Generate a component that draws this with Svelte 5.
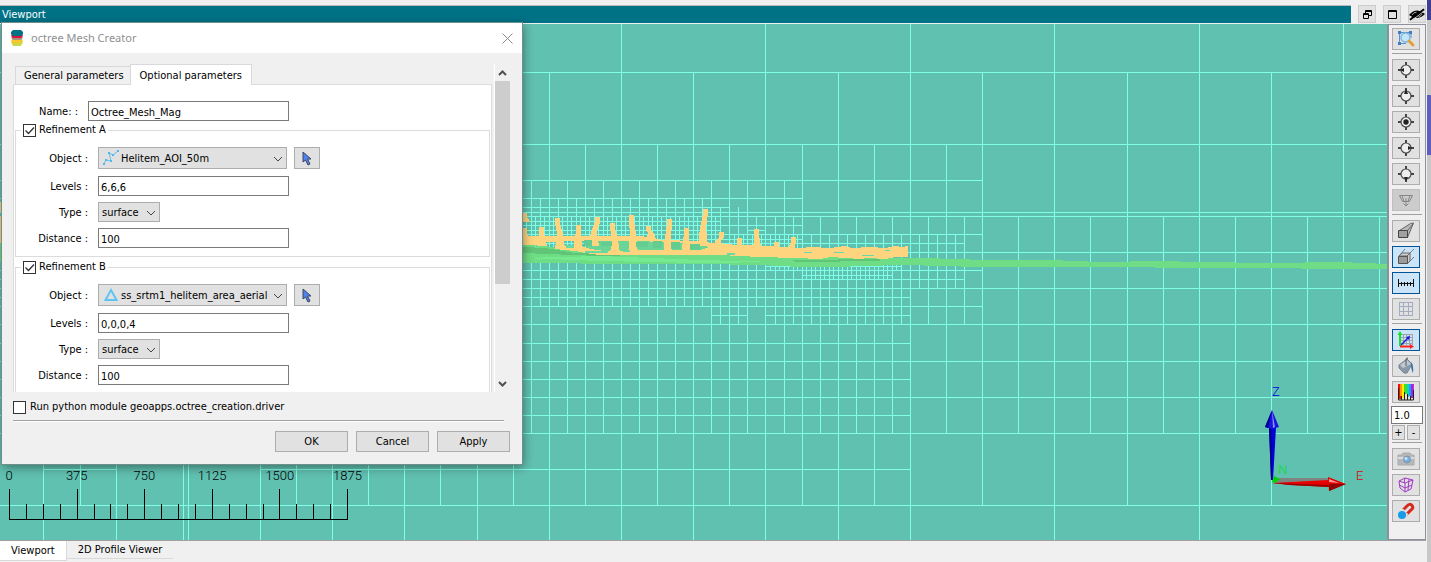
<script>
  let name = $state('Octree_Mesh_Mag');
  let runModule = $state(false);
  let scale = $state('1.0');

  let groups = $state([
    { id: 'a', title: 'Refinement A', on: true, icon: 'curve', object: 'Helitem_AOI_50m', levels: '6,6,6', type: 'surface', distance: '100' },
    { id: 'b', title: 'Refinement B', on: true, icon: 'surface', object: 'ss_srtm1_helitem_area_aerial', levels: '0,0,0,4', type: 'surface', distance: '100' }
  ]);

  // Mesh cell edges. Columns: [x positions, top, bottom]; rows: [y, left, right].
  const run = (from, to, step) => {
    const out = [];
    for (let v = from; v <= to; v += step) out.push(Math.round(v));
    return out;
  };
  const columns = [
    [[621, 765, 910, 1054, 1199, 1343], 24, 540],
    [[43, 116, 183, 188, 260, 332, 404, 477, 549, 693, 838], 72, 540],
    [[982, 1127, 1271], 72, 505],
    [[80, 296, 368, 440, 513, 585, 657, 729, 802, 874], 144, 505],
    [[946], 144, 433],
    [[1018, 1090, 1163, 1235, 1307, 1379], 216, 433],
    [[531, 567, 603, 639, 675, 711], 180, 433],
    [[747, 784], 180, 433],
    [[820, 856, 892], 216, 433],
    [[928, 964], 216, 324],
    [run(522, 712, 18), 198, 306],
    [[720, 738], 207, 324],
    [[756], 216, 306],
    [[775, 793], 216, 324],
    [[811, 829, 847, 865, 883, 901], 234, 324],
    [[919, 937, 955], 234, 288],
    [run(526, 721, 9), 216, 252],
    [run(531, 720, 9), 216, 252],
    [run(734, 802, 9), 234, 250],
    [run(770, 903, 9), 265, 270],
    [run(806, 890, 9), 270, 279]
  ];
  const rows = [
    [72, 0, 2000], [144, 0, 2000], [180, 0, 982], [198, 0, 802], [207, 0, 729], [212, 0, 2000],
    [216, 0, 2000], [221, 0, 720], [225, 0, 802], [230, 0, 720], [230, 747, 765], [234, 0, 982],
    [239, 0, 802], [243, 0, 964], [252, 0, 2000], [266, 765, 901], [270, 0, 982], [275, 802, 892],
    [279, 0, 964], [288, 0, 2000], [297, 0, 910], [306, 0, 982], [315, 711, 747], [315, 765, 910],
    [324, 0, 2000], [343, 0, 910], [361, 0, 2000], [379, 0, 910], [397, 0, 2000], [415, 0, 910],
    [433, 0, 2000], [469, 43, 116], [469, 260, 910], [505, 0, 2000]
  ];
  const edges =
    columns.map(([xs, a, b]) => xs.map((x) => `M${x + 0.5} ${a}V${b}`).join('')).join('') +
    rows.map(([y, a, b]) => `M${a} ${y + 0.5}H${b}`).join('');

  // Flight line towers: top x, foot x, top y, foot y
  const towers = [
    [524, 525, 213, 222], [524, 525, 228, 245], [541, 542, 227, 246], [557, 560, 218, 249], [578, 578, 225, 251],
    [597, 594, 217, 246], [612, 615, 223, 254], [631, 633, 215, 254], [648, 651, 226, 240], [669, 668, 219, 254],
    [686, 686, 228, 254], [705, 703, 209, 246], [721, 718, 232, 250], [739, 739, 238, 256], [756, 757, 229, 252],
    [776, 776, 242, 254], [793, 792, 237, 254]
  ];
  const towerPath = towers
    .map(([tx, fx, ty, fy]) => {
      const m = Math.round((ty + fy) / 2);
      return `M${tx - 2} ${ty}H${tx + 3}V${ty + 5}L${fx + 3} ${m}L${fx + 5} ${fy}H${fx - 5}L${fx - 3} ${m}L${tx - 2} ${ty + 5}Z`;
    })
    .join('');

  const ticks = Array.from({ length: 21 }, (_, i) => [Math.round(9 + i * 16.9) + 0.5, i % 4 === 0]);
  const tickLabels = ['0', '375', '750', '1125', '1500', '1875'];

  const tools = [
    [['zoom', 'Zoom to area']],
    [['west', 'View from west'], ['up', 'View from top'], ['centre', 'Centre view'], ['east', 'View from east'], ['down', 'View from below'], ['plane', 'View plane', 'off']],
    [['persp', 'Perspective'], ['ortho', 'Orthographic', 'on'], ['ruler', 'Scale bar', 'on'], ['grid', 'Grid']],
    [['axes', 'Axes', 'on'], ['fill', 'Background'], ['colours', 'Colours']],
    [['camera', 'Snapshot'], ['mesh', 'Mesh'], ['magnet', 'Snap']]
  ];
</script>

{#snippet glyph(kind)}
  <svg class="glyph" width="20" height="18" viewBox="0 0 20 18" aria-hidden="true">
    {#if kind === 'zoom'}
      <path d="M3.500 2.500H15M3.500 2.500V13.500H10M15 3v5" fill="none" stroke="#5b92c8" />
      <circle cx="9.500" cy="7.500" r="4.500" fill="#bfe6fb" stroke="#82b6dc" stroke-width="1.500" />
      <path d="m13 11 4 4" stroke="#e0a13b" stroke-width="3" stroke-linecap="round" />
      <path d="M2 1h3v3H2zM13 1h3v3h-3zM2 12h3v3H2z" fill="#3d7fc4" />
    {:else if ['west', 'up', 'centre', 'east', 'down'].includes(kind)}
      <circle cx="10" cy="9" r="5" fill="#eee" stroke="#4a4a4a" stroke-width="1.200" />
      <path d="M10 1v3M10 14v3M2 9h3M15 9h3" stroke="#444" stroke-width="2" />
      {#if kind === 'west'}<path d="m4 9 4-2v4z" fill="#222" />{/if}
      {#if kind === 'up'}<path d="m10 2 2 5H8z" fill="#222" />{/if}
      {#if kind === 'centre'}<circle cx="10" cy="9" r="2.700" fill="#222" />{/if}
      {#if kind === 'east'}<path d="m16 9-4-2v4z" fill="#222" />{/if}
      {#if kind === 'down'}<path d="m10 16 2-4H8z" fill="#222" />{/if}
    {:else if kind === 'plane'}
      <path d="M3.500 4.500h13l-3 6h-7zM6 4.500l2 6M14 4.500l-2 6M10 7v7M7.500 12.500l2.500 2.500 2.500-2.500" fill="none" stroke="#858585" />
    {:else if kind === 'persp'}
      <path d="m3.500 8.500 11-7 3-.500-6 14.500zM11.500 8.500l6-7" fill="#b9b9b9" stroke="#666" />
      <path d="M2.500 8.500h9v7h-9z" fill="#a0a0a0" stroke="#444" />
    {:else if kind === 'ortho'}
      <path d="m3 8 6-7M11 8l7-7M12 15l6-6" stroke="#6c7f90" />
      <path d="m3 8 3-3h8l-3 3zM11 8l3-3v8l-3 3z" fill="#cfcfcf" stroke="#666" />
      <path d="M2.500 8.500h9v7h-9z" fill="#9b9b9b" stroke="#555" />
    {:else if kind === 'ruler'}
      <path d="M2.500 5v8M5.500 8v4M8.500 8v4M11.500 8v4M14.500 8v4M17.500 5v8M2 9.500h16" fill="none" stroke="#111" shape-rendering="crispEdges" />
    {:else if kind === 'grid'}
      <path d="M3.500 2v14M7.500 2v14M12.500 2v14M16.500 2v14M3 2.500h14M3 6.500h14M3 11.500h14M3 15.500h14" fill="none" stroke="#a3abc0" />
    {:else if kind === 'axes'}
      <path d="M7.500 3v11M10.500 3v11M13.500 3v11M16.500 3v11M4 3.500h13M4 6.500h13M4 9.500h13M4 12.500h13" fill="none" stroke="#9aa5ae" />
      <path d="m4 15 8-8" stroke="#1616dd" stroke-width="1.500" /><path d="m14 5-1 4-3-3z" fill="#1616dd" />
      <path d="M4 15V3" stroke="#17e02a" stroke-width="2" /><path d="m4 0 2.500 4h-5z" fill="#17e02a" />
      <path d="M4 15.500h11" stroke="#f22" stroke-width="2" /><path d="m18 15.500-4-2.500v5z" fill="#f22" />
    {:else if kind === 'fill'}
      <path d="m3 8 8-6 5 5-5 9-3 0-5-5z" fill="#8a98a8" stroke="#76838f" />
      <path d="m4 8 7-5 4 4-8 4z" fill="#c0c9d2" />
      <path d="M10 9V2.500q0-1.500 2-1.500" fill="none" stroke="#555" /><path d="M15 5q3 3 2 11-2-3-2-9z" fill="#2f78b3" />
    {:else if kind === 'colours'}
      <path d="M2 1h3v15H2z" fill="#e11" /><path d="M4 1h3v12H4z" fill="#f90" /><path d="M6 1h3v14H6z" fill="#fe0" />
      <path d="M8 1h3v10H8z" fill="#4d2" /><path d="M11 1h2v13h-2z" fill="#0db" /><path d="M13 1h2v12h-2z" fill="#29f" /><path d="M15 1h2v14h-2z" fill="#92f" /><path d="M17 1h1v15h-1z" fill="#e2a" />
      <path d="M2.500 5v12h15V7M5.500 13v4M8.500 9v8M11.500 11v6M14.500 13v4" fill="none" stroke="#221" />
    {:else if kind === 'camera'}
      <path d="M2 5h4l1-2h7l1 2h3v10H2z" fill="#b5b8bb" stroke="#aaa" /><path d="M2 7h16v2H2z" fill="#d9dbdc" />
      <circle cx="11" cy="9.500" r="3.500" fill="#75aee0" stroke="#8793a0" /><circle cx="10" cy="8.500" r="1.500" fill="#c6e3fa" />
    {:else if kind === 'mesh'}
      <path d="m3 5 6-3 8 2-2 9-6 3-5-4zM3 5l6 2 8-3M9 7v9M9 2 8 7M3.500 9l5.500 3 7-3M13 3l-1 11" fill="none" stroke="#a23bc4" />
    {:else if kind === 'magnet'}
      <path d="m7 8 4-4q3-3 5-.500t-1 4.500l-5 5" fill="none" stroke="#d52b1e" stroke-width="3" />
      <path d="m6 9.500 2-2M9.500 13.500l2-2" stroke="#ddd" stroke-width="3" /><circle cx="6" cy="13" r="4" fill="#139ce8" />
    {/if}
  </svg>
{/snippet}

<div class="app">
  <div class="main">
    <header class="dock">
      <h1>Viewport</h1>
      <button aria-label="Restore"><svg width="11" height="11" viewBox="0 0 11 11"><path d="M3.500 5V1.500h6v5H7M1.500 4.500h5v5h-5zM1 5.500h6M3 2.500h7" fill="none" stroke="#000" /></svg></button>
      <button aria-label="Maximise"><svg width="11" height="11" viewBox="0 0 11 11"><path d="M2 1.500h7.500v8H1.500v-8zM1 2.500h9" fill="none" stroke="#000" /></svg></button>
      <button aria-label="Hide"><svg width="16" height="13" viewBox="0 0 17 13"><path d="M0 7Q8-2 17 6 9 14 0 7Z" fill="#000" /><path d="M3 7q2-3 5-3M10 9q3-1 4-3" fill="none" stroke="#bbb" /><path d="M1 12 16 1" stroke="#000" stroke-width="2" /><path d="M4 12 16 3" stroke="#ccc" /></svg></button>
    </header>

    <div class="work">
      <div class="view">
        <svg class="scene" aria-hidden="true">
          <g transform="translate(0 -24)">
            <path d={edges} fill="none" stroke="#7fffe5" shape-rendering="crispEdges" />
            <g shape-rendering="crispEdges">
              <path d="M0 242 522 245 545 246 575 251 640 254 700 253 760 256 900 258 925 258 985 260 1050 260 1100 262 1160 261 1200 262 1270 263 1340 262 1388 264V269H1350L1250 268 1060 267 980 267 905 265 860 266 840 267H800L760 265 700 264 640 264 522 263 0 262Z" fill="#6fdd86" />
              <path d="M522 247 545 248 575 253 640 255 600 256 522 253ZM770 261 860 259 900 260 820 262Z" fill="#61c578" />
              <path d="M522 258 600 256 700 260 780 262 700 263 600 261Z" fill="#76ea8f" />
              <path d="M582 240 705 242 720 247 705 253 590 252Z" fill="#69d596" />
              <path d="M0 202H2V212H0ZM0 216H2V243H0Z" fill="#ffd47f" />
              <path d={towerPath} fill="#ffd47f" />
              <path d="M522 236H560L640 236 655 238 660 240 700 241 718 244 745 245 765 246 800 248 812 247 830 248 845 246 852 248 870 247 885 248 895 246 902 247 908 246V257H895L885 259 868 258 860 259 830 257 820 259 795 258 760 257 740 256 720 255H600L585 253 575 251 555 249V246H582L590 249 605 251 640 250 668 250 700 250 710 247 690 244 660 242 640 241 580 241 545 242 545 245H522Z" fill="#ffd47f" />
              <path d="M566 245H574V248H566ZM585 251H608V253H585ZM623 250H630V252H623ZM727 253H735V255H727ZM804 252H812V253H804ZM834 252H844V253H834ZM862 255H874V256H862ZM885 250H890V251H885Z" fill="#68d9a5" />
              <path d="M584 240H592V246H584ZM601 242H612V246H601ZM636 242H648V247H636ZM653 241H662V248H653ZM671 242H680V249H671ZM690 244H700V250H690Z" fill="#64cc91" />
            </g>
            <g fill="none" stroke="#000" shape-rendering="crispEdges">
              <path d="M9 519.500H348" />
              {#each ticks as [x, major]}<path d="M{x} {major ? 489 : 504}V519" />{/each}
            </g>
            {#each tickLabels as t, i}
              <text class="tick" x={9 + i * 67.700} y="480" text-anchor="middle">{t}</text>
            {/each}
            <path d="M1278 478H1329V482L1300 482 1274 484Z" fill="#7d8583" />
            <path d="M1269 427H1276L1273 480H1271Z" fill="#0000d8" /><path d="M1269 427H1271L1272 480H1271Z" fill="#000078" />
            <path d="M1272 410 1279 427 1272 429 1265 427Z" fill="#1515e0" /><path d="M1272 410 1268 428 1265 427Z" fill="#00008a" /><path d="m1272 410 3 17-2 1Z" fill="#8b8bff" />
            <path d="M1272 483 1329 480V487L1290 485Z" fill="#e60000" /><path d="M1272 483 1329 485V487L1290 485Z" fill="#900" />
            <path d="M1328 477 1346 484 1329 491Z" fill="#e00000" /><path d="m1329 484 17 0-17 7Z" fill="#930000" /><path d="m1329 479 10 4-10-1Z" fill="#ff9d9d" />
            <path d="m1272 482 2-6 6 3-5 4Z" fill="#00d400" />
            <text class="axis" x="1272" y="396" fill="#0000e6">Z</text>
            <text class="axis" x="1278" y="474" fill="#00e020">N</text>
            <text class="axis" x="1356" y="480" fill="#e60000">E</text>
          </g>
        </svg>
      </div>

      <aside class="tools" aria-label="View tools">
        {#each tools as group, i}
          <div class="set">
            {#each group as [kind, label, state]}
              <button class="tool" class:on={state === 'on'} class:off={state === 'off'} aria-label={label}>{@render glyph(kind)}</button>
            {/each}
            {#if i === 3}
              <div class="exag">
                <input aria-label="Vertical exaggeration" bind:value={scale} />
                <div class="steps"><button>+</button><button>-</button></div>
              </div>
            {/if}
          </div>
        {/each}
      </aside>
    </div>

    <nav class="pages">
      <button class="page current">Viewport</button>
      <button class="page">2D Profile Viewer</button>
    </nav>
  </div>
  <div class="edge"></div>

  <section class="dialog" role="dialog" aria-labelledby="dlg-title">
    <div class="caption">
      <svg width="12" height="16" viewBox="0 0 12 16" aria-hidden="true">
        <path d="M3 10h6l3 2-2 4H2l-2-4z" fill="#c9d94a" /><path d="M2 8h8l2 3-2 2H2l-2-2z" fill="#f8c72e" />
        <path d="M2 6h8l2 2-2 2H2L0 8z" fill="#a7937c" /><path d="M1 4h10l1 2-2 2H2L0 6z" fill="#d9143c" /><path d="M2 0h8l2 2v2l-2 2H2L0 4V2z" fill="#007286" />
      </svg>
      <h2 id="dlg-title">octree Mesh Creator</h2>
      <button aria-label="Close"><svg width="11" height="11" viewBox="0 0 11 11"><path d="m.500.500 10 10M10.500.500l-10 10" stroke="#8a8a8a" /></svg></button>
    </div>

    <div class="scroller">
      <div class="content">
        <div class="tabs" role="tablist">
          <button role="tab" aria-selected="false">General parameters</button>
          <button role="tab" aria-selected="true" class="active">Optional parameters</button>
        </div>
        <div class="panel">
          <div class="row name">
            <label for="mesh-name">Name: :</label>
            <input id="mesh-name" bind:value={name} />
          </div>
          {#each groups as g (g.id)}
            <fieldset>
              <legend><label><input type="checkbox" bind:checked={g.on} />{g.title}</label></legend>
              <div class="row object">
                <label for="obj-{g.id}">Object :</label>
                <span class="combo wide">
                  <svg class="kind" width="16" height="16" viewBox="0 0 16 16" aria-hidden="true">
                    {#if g.icon === 'curve'}
                      <path d="m1 14 2-4 5 1-2-8 4 2 5-4" fill="none" stroke="#5fc0ee" /><path d="M0 13h2v2H0zM2 9h2v2H2zM7 10h2v2H7zM5 2h2v2H5zM9 4h2v2H9zM14 0h2v2h-2z" fill="#4fb8ec" />
                    {:else}
                      <path d="M8 3 13.500 13H2.500z" fill="none" stroke="#5fc5f0" stroke-width="2" />
                    {/if}
                  </svg>
                  <select id="obj-{g.id}" bind:value={g.object}><option>{g.object}</option></select>
                  <svg class="arrow" width="10" height="6" viewBox="0 0 10 6" aria-hidden="true"><path d="m1 1 4 4 4-4" fill="none" stroke="#444" /></svg>
                </span>
                <button class="pick" aria-label="Pick object">
                  <svg width="10" height="15" viewBox="0 0 10 15"><path d="M1 1v10l2.500-2 2.500 5 2-1-2.500-5H9z" fill="#4f83f0" stroke="#3c4660" /></svg>
                </button>
              </div>
              <div class="row"><label for="lev-{g.id}">Levels :</label><input id="lev-{g.id}" bind:value={g.levels} /></div>
              <div class="row">
                <label for="typ-{g.id}">Type :</label>
                <span class="combo">
                  <select id="typ-{g.id}" bind:value={g.type}><option>surface</option></select>
                  <svg class="arrow" width="10" height="6" viewBox="0 0 10 6" aria-hidden="true"><path d="m1 1 4 4 4-4" fill="none" stroke="#444" /></svg>
                </span>
              </div>
              <div class="row"><label for="dis-{g.id}">Distance :</label><input id="dis-{g.id}" bind:value={g.distance} /></div>
            </fieldset>
          {/each}
        </div>
      </div>
      <div class="bar">
        <svg width="9" height="6" viewBox="0 0 9 6" aria-hidden="true"><path d="m1 5 3.500-3.500L8 5" fill="none" stroke="#505050" stroke-width="2" /></svg>
        <div class="track"><div class="thumb"></div></div>
        <svg width="9" height="6" viewBox="0 0 9 6" aria-hidden="true"><path d="m1 1 3.500 3.500L8 1" fill="none" stroke="#505050" stroke-width="2" /></svg>
      </div>
    </div>

    <label class="module"><input type="checkbox" bind:checked={runModule} />Run python module geoapps.octree_creation.driver</label>
    <hr />
    <div class="actions"><button>OK</button><button>Cancel</button><button>Apply</button></div>
  </section>
</div>

<style>
  :global(body) { margin: 0; }
  .app {
    position: relative; display: flex; height: 100vh; overflow: hidden;
    background: #f0f0f0; color: #000;
    font: 11px/14px "DejaVu Sans Condensed", "Noto Sans", sans-serif;
  }
  .app :is(button, input, select) { box-sizing: border-box; margin: 0; font: inherit; color: inherit; border-radius: 0; }
  button { display: flex; align-items: center; justify-content: center; padding: 0; background: #e1e1e1; border: 1px solid #adadad; }
  svg { display: block; flex: none; }
  .main { flex: 1; min-width: 0; display: flex; flex-direction: column; }
  .edge { width: 5px; background: linear-gradient(#3d3f93 20px, #c8c8c8 20px, #c8c8c8 95px, #5d5fc0 95px, #5d5fc0 155px, #c8c8c8 155px) right / 4px 100% no-repeat; }

  .dock { display: flex; align-items: center; gap: 7px; height: 20px; padding-top: 4px; background: #f0f0f0; }
  .dock h1 { flex: 1; margin: 0; height: 17px; padding-left: 2px; border-top: 1px solid #bbb; background: #007286; color: #fff; font: inherit; line-height: 17px; }
  .dock button { width: 18px; height: 18px; border-color: #ccc; }

  .work { flex: 1; min-height: 0; display: flex; }
  .view { flex: 1; min-width: 0; background: #61c1b1; overflow: hidden; }
  .scene { width: 100%; height: 100%; }
  .tick { font: 300 13px Roboto, sans-serif; }
  .axis { font: 300 13px Roboto, sans-serif; }

  .tools { box-sizing: border-box; width: 39px; padding: 0 3px; border: 1px solid #8c919b; border-left-width: 2px; background: #f0f0f0; }
  .set { display: flex; flex-direction: column; gap: 4px; padding: 5px 0 3px; border-bottom: 1px solid #a0a0a0; }
  .set:first-child { padding-top: 3px; }
  .set:last-child { border-bottom: 0; }
  .tool { width: 28px; height: 22px; }
  .tool.on { background: #cce4f7; border-color: #005499; }
  .tool.off { background: #ccc; border-color: #bfbfbf; }
  .exag { display: flex; flex-direction: column; gap: 1px; margin: -1px 0 -1px -1px; }
  .exag input { width: 32px; height: 18px; padding: 1px 2px 0; border: 1px solid #7a7a7a; background: #fff; }
  .steps { display: flex; gap: 2px; padding-left: 1px; }
  .steps button { width: 13px; height: 15px; }

  .pages { display: flex; align-items: flex-start; height: 21px; border-top: 1px solid #a0a0a0; }
  .page { height: 18px; padding: 1px 11px 0; border: 0; border-bottom: 1px solid #d9d9d9; background: #f0f0f0; }
  .page.current { height: 20px; background: #fff; border-right: 1px solid #d9d9d9; }

  .dialog {
    position: absolute; left: 2px; top: 23px; box-sizing: border-box; width: 520px; padding-bottom: 12px;
    background: #f0f0f0; box-shadow: 0 0 0 1px #6f8f8a, 1px 3px 10px rgba(0, 0, 0, 0.45);
  }
  .caption { display: flex; align-items: center; gap: 8px; height: 30px; padding: 0 9px; background: #fff; }
  .caption h2 { flex: 1; margin: 0; font: 12px/16px "Noto Sans", "Open Sans", sans-serif; font-size: 11px; color: #8f8f8f; }
  .caption button { background: none; border: 0; }

  .scroller { display: flex; gap: 2px; height: 328px; padding: 11px 12px 0 11px; overflow: hidden; }
  .content { flex: 1; min-width: 0; overflow: hidden; }
  .tabs { position: relative; display: flex; align-items: flex-end; height: 21px; margin-bottom: -1px; padding-left: 2px; }
  .tabs button { height: 19px; padding: 1px 6px 0 8px; border: 1px solid #d9d9d9; border-right: 0; background: #f0f0f0; }
  .tabs .active { height: 21px; padding: 1px 9px 0; border-right: 1px solid #d9d9d9; border-bottom: 0; background: #fff; }
  .panel { padding: 16px 1px 0; border: 1px solid #dcdcdc; background: #fff; }
  .row { display: flex; align-items: center; gap: 10px; height: 20px; margin-bottom: 6px; }
  .row label { width: 72px; padding-top: 1px; text-align: right; }
  .row input { width: 191px; height: 20px; padding: 2px 2px 0; border: 1px solid #7a7a7a; background: #fff; }
  .name { margin-bottom: 2px; }
  .name label { width: 63px; }
  .row.name input { width: 201px; }

  fieldset { min-width: 0; margin: 0 0 3px; padding: 10px 0 2px; border: 1px solid #dcdcdc; }
  legend { margin-left: 5px; padding: 0 2px; }
  legend label, .module { display: flex; align-items: center; gap: 3px; height: 14px; }
  input[type='checkbox'] { appearance: none; width: 13px; height: 13px; border: 1px solid #333; background: #fff; }
  input[type='checkbox']:checked {
    background: #fff url("data:image/svg+xml,%3Csvg xmlns='http://www.w3.org/2000/svg' width='11' height='11'%3E%3Cpath d='m1.500 5.500 3 3 5.500-6' fill='none' stroke='%23333' stroke-width='1.300'/%3E%3C/svg%3E") center no-repeat;
  }
  .combo { position: relative; display: block; width: 62px; height: 20px; }
  .combo select { appearance: none; width: 100%; height: 100%; padding: 2px 3px 0; border: 1px solid #adadad; background: #e1e1e1; }
  .combo.wide { width: 189px; height: 22px; margin-right: -3px; }
  .combo.wide select { padding-left: 22px; padding-right: 0; }
  .kind { position: absolute; left: 5px; top: 3px; }
  .arrow { position: absolute; right: 4px; top: 50%; margin-top: -2px; }
  .row.object { height: 22px; margin-bottom: 7px; }
  .pick { width: 26px; height: 22px; }

  .bar { display: flex; flex-direction: column; align-items: center; width: 15px; padding: 6px 0 5px; border-left: 1px solid #fff; }
  .track { flex: 1; align-self: stretch; padding: 5px 0; }
  .thumb { height: 203px; background: #cdcdcd; }

  .module { margin: 8px 0 0 11px; gap: 4px; }
  hr { margin: 6px 18px 9px 11px; border: 0; border-top: 1px solid #a0a0a0; border-bottom: 1px solid #fff; }
  .actions { display: flex; justify-content: flex-end; gap: 8px; padding-right: 12px; }
  .actions button { width: 73px; height: 21px; }
</style>
